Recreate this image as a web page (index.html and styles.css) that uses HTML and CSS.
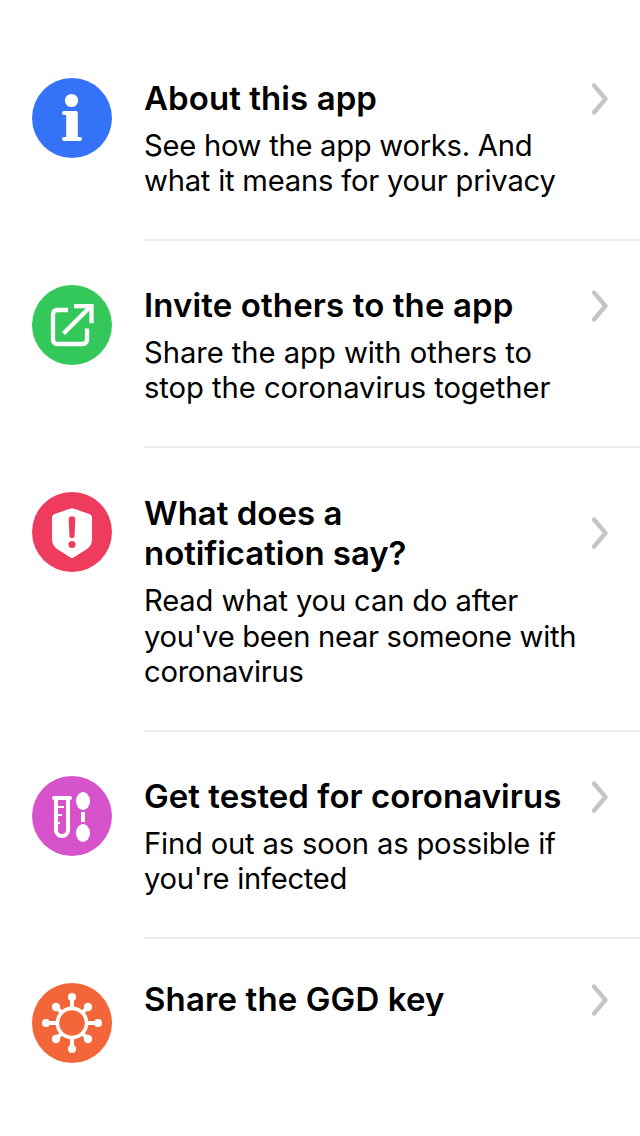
FILE: index.html
```html
<!DOCTYPE html>
<html lang="en">
<head>
<meta charset="utf-8">
<title>Menu</title>
<link rel="stylesheet" href="styles.css">
</head>
<body>
<main class="menu">
  <section class="row">
    <svg class="icon" viewBox="0 0 80 80"><circle cx="40" cy="40" r="40" fill="#3473f8"/><g fill="#fff"><circle cx="39.5" cy="22.5" r="6.6"/><path d="M32 33H44q1.800 0 1.800 1.800V59H48a2 2 0 0 1 0 4H32a2 2 0 0 1 0-4h2.200V37H32a2 2 0 0 1 0-4z"/></g></svg>
    <div class="content">
      <div class="head"><h2 class="title"><span class="line t1">About this app</span></h2><svg class="chevron" viewBox="0 0 18 34"><path d="M3 3.500 14.500 17 3 30.500"/></svg></div>
      <p class="desc"><span class="line d1">See how the app works. And</span><span class="line d2">what it means for your privacy</span></p>
    </div>
  </section>
  <section class="row">
    <svg class="icon" viewBox="0 0 80 80"><circle cx="40" cy="40" r="40" fill="#34c759"/><g fill="none" stroke="#fff" stroke-width="4.300"><path d="M36 25H25.500q-4.500 0-4.500 4.500v25q0 4.500 4.500 4.500h25q4.500 0 4.500-4.500V43.500"/><path d="M31.500 48.500 59 21M42 21.200h17.500v17"/></g></svg>
    <div class="content">
      <div class="head"><h2 class="title"><span class="line t2">Invite others to the app</span></h2><svg class="chevron" viewBox="0 0 18 34"><path d="M3 3.500 14.500 17 3 30.500"/></svg></div>
      <p class="desc"><span class="line d3">Share the app with others to</span><span class="line d4">stop the coronavirus together</span></p>
    </div>
  </section>
  <section class="row row-tall">
    <svg class="icon" viewBox="0 0 80 80"><circle cx="40" cy="40" r="40" fill="#ee3b5e"/><path fill="#fff" d="M38.500 16.500q1.500-.7 3 0L58 22.300q2 .8 2 3V47q0 6.500-5 10L41.500 65.500q-1.500 1-3 0L25 57q-5-4-5-10V25.300q0-2.200 2-3z"/><path fill="#ee3b5e" d="M36.700 27.500a3.300 3.300 0 0 1 6.600 0L42.600 43.500a2.600 2.600 0 0 1-5.200 0z"/><circle cx="40" cy="52.500" r="3.500" fill="#ee3b5e"/></svg>
    <div class="content">
      <div class="head"><h2 class="title"><span class="line t3">What does a</span><span class="line t4">notification say?</span></h2><svg class="chevron" viewBox="0 0 18 34"><path d="M3 3.500 14.500 17 3 30.500"/></svg></div>
      <p class="desc"><span class="line d5">Read what you can do after</span><span class="line d6">you've been near someone with</span><span class="line d7">coronavirus</span></p>
    </div>
  </section>
  <section class="row">
    <svg class="icon" viewBox="0 0 80 80"><circle cx="40" cy="40" r="40" fill="#d753cb"/><g fill="none" stroke="#fff"><path stroke-width="4" stroke-linecap="round" d="M22 22h16"/><path stroke-width="4" d="M24 22v32a6 6 0 0 0 12 0V22"/><path stroke-width="2" d="M25 31h7M25 39h5M25 47h3"/></g><g fill="#fff"><ellipse cx="51" cy="25" rx="7" ry="9"/><ellipse cx="51" cy="57" rx="7" ry="9"/><path d="M49 36h4v10h-4z"/></g></svg>
    <div class="content">
      <div class="head"><h2 class="title"><span class="line t5">Get tested for coronavirus</span></h2><svg class="chevron" viewBox="0 0 18 34"><path d="M3 3.500 14.500 17 3 30.500"/></svg></div>
      <p class="desc"><span class="line d8">Find out as soon as possible if</span><span class="line d9">you're infected</span></p>
    </div>
  </section>
  <section class="row row-last">
    <svg class="icon" viewBox="0 0 80 80"><circle cx="40" cy="40" r="40" fill="#f26639"/><g fill="none" stroke="#fff" stroke-width="4"><circle cx="40" cy="40" r="14.600" stroke-width="3.600"/><path d="M40 26V14M40 54v12M26 40H14M54 40h12M30 30l-6-6M50 30l6-6M30 50l-6 6M50 50l6 6"/></g><g fill="#fff"><circle cx="40" cy="14" r="4"/><circle cx="40" cy="66" r="4"/><circle cx="14" cy="40" r="4"/><circle cx="66" cy="40" r="4"/><circle cx="24" cy="24" r="4.200"/><circle cx="56" cy="24" r="4.200"/><circle cx="24" cy="56" r="4.200"/><circle cx="56" cy="56" r="4.200"/></g></svg>
    <div class="content">
      <div class="head"><h2 class="title"><span class="line t6">Share the GGD key</span></h2><svg class="chevron" viewBox="0 0 18 34"><path d="M3 3.500 14.500 17 3 30.500"/></svg></div>
    </div>
  </section>
</main>
</body>
</html>
```
FILE: styles.css
```css
* { box-sizing: border-box; }
body {
  margin: 0;
  background: #fff;
  color: #000;
  font-family: Inter, "Liberation Sans", sans-serif;
}
.menu { padding-top: 34px; height: 1136px; overflow: hidden; }
.row { display: flex; gap: 32px; height: 207px; padding-left: 32px; }
.row-tall { height: 284px; }
.icon { flex: none; width: 80px; height: 80px; margin-top: 44px; }
.content { flex: 1; padding-top: 44px; border-bottom: 2px solid #ededed; }
.head { display: flex; align-items: center; justify-content: space-between; padding-right: 31px; }
.title, .desc { margin: 0; }
.title { font-size: 33px; line-height: 40px; font-weight: 600; }
.desc { margin-top: 10px; font-size: 29.200px; line-height: 35.400px; }
.line { display: block; width: max-content; white-space: nowrap; }
.chevron { flex: none; width: 18px; height: 34px; margin: -1px 0 -3px; fill: none; stroke: #c5c5c7; stroke-width: 4.300; stroke-linecap: round; stroke-linejoin: round; }
.row-tall .content { padding-top: 45px; }
.row-tall .chevron { margin: -2px 0; }
.row-tall .desc { line-height: 35.600px; }
.row-last { height: 150px; }
.row-last .content { padding-top: 40px; border: 0; }
.row-last .title { height: 37px; overflow: hidden; }
.row-last .chevron { margin: 1px 0 -3px; }

.t1 { letter-spacing: 0.070px; }
.t2 { letter-spacing: 0.120px; }
.t4 { letter-spacing: -0.060px; }
.t5 { letter-spacing: 0.040px; }
.t6 { letter-spacing: 0.120px; }
.d1 { letter-spacing: -0.270px; }
.d2 { letter-spacing: -0.220px; }
.d3 { letter-spacing: -0.040px; }
.d4 { letter-spacing: -0.040px; }
.d5 { letter-spacing: -0.150px; }
.d6 { letter-spacing: -0.310px; }
.d7 { letter-spacing: -0.270px; }
.d8 { letter-spacing: -0.180px; }
.d9 { letter-spacing: -0.270px; }
```
